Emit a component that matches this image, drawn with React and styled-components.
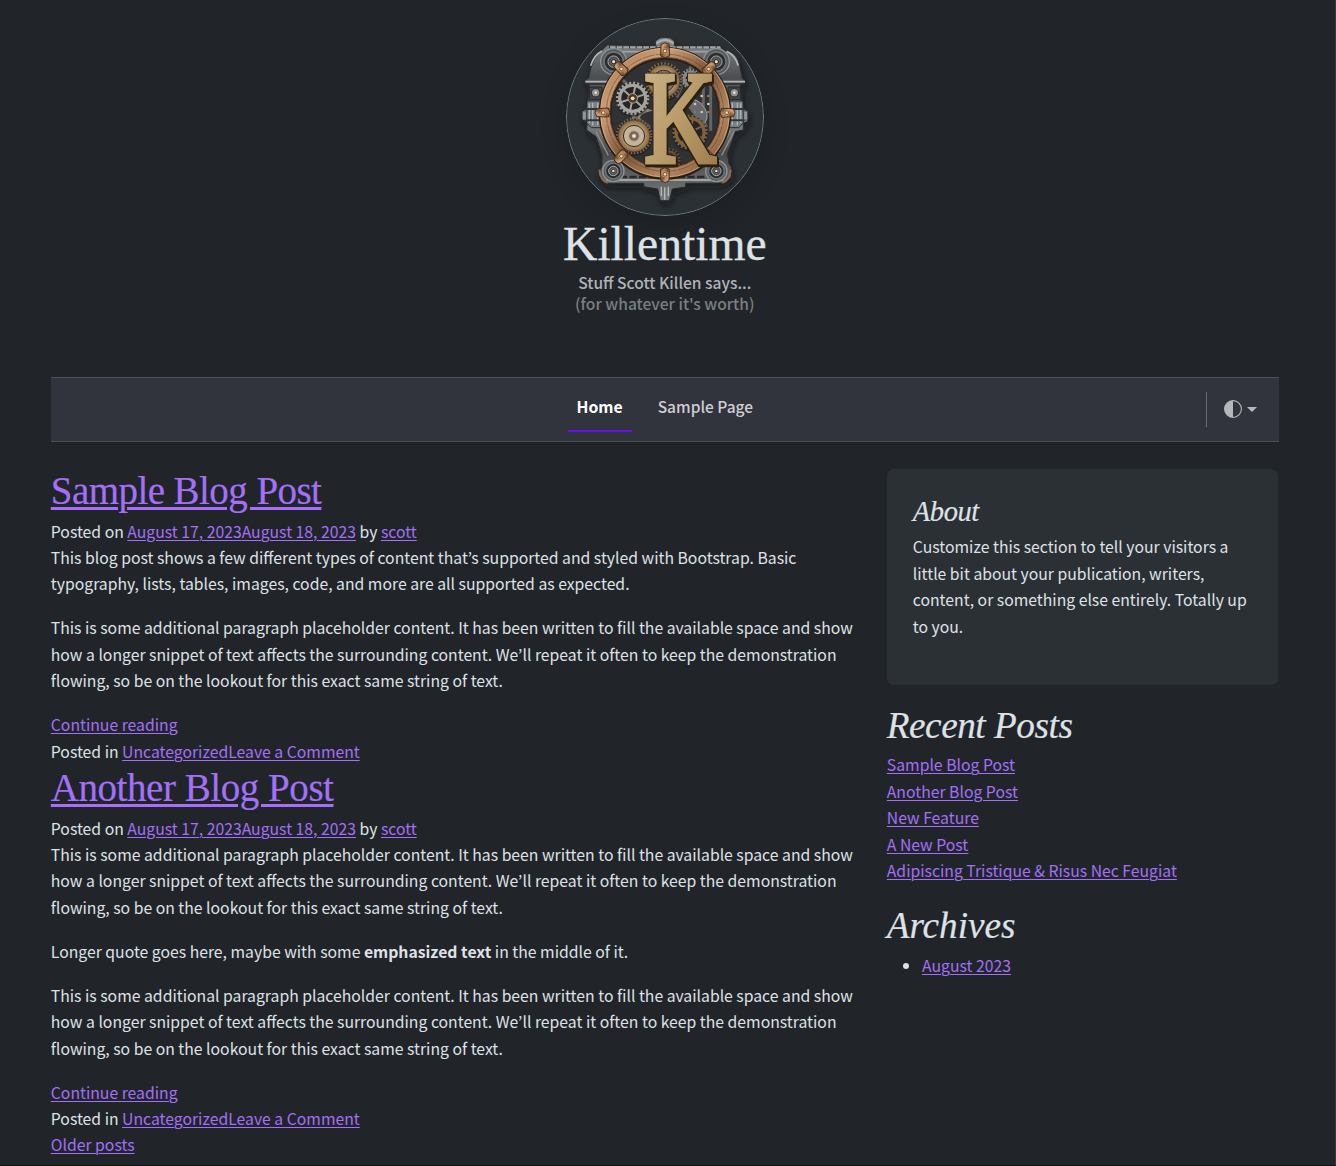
import React from "react";
import styled, { createGlobalStyle, css } from "styled-components";

const Global = createGlobalStyle`
  *, *::before, *::after { box-sizing: border-box; }
  html, body { margin: 0; padding: 0; background: #212529; }
  body {
    height: 1166px;
    overflow: hidden;
    color: #dee2e6;
    font-family: "Noto Sans CJK KR", "Open Sans", sans-serif;
    font-size: 15.76px;
    line-height: 26.4px;
  }
`;

const Page = styled.div`
  height: 1166px;
  padding: 18px 56px 0 50.8px;
  border-right: 1px solid #34383a;
  border-bottom: 1px solid #0d1013;
  overflow: hidden;
`;

const Header = styled.header`
  width: 1228px;
  height: 359px;
  display: flex;
  flex-direction: column;
  align-items: center;
`;

const Emblem = styled.svg`
  display: block;
  width: 198px;
  height: 198px;
  border-radius: 50%;
  box-shadow: 0 9px 26px rgba(0, 0, 0, 0.17);
`;

const SiteTitle = styled.h1`
  margin: 2px 0 1px;
  font: 400 47.6px/53px "Liberation Serif", serif;
  -webkit-text-stroke: 0.3px currentColor;
`;

const Tagline = styled.p`
  margin: 0;
  text-align: center;
  font-weight: 500;
  font-size: 15.58px;
  line-height: 21px;
  color: #afb3b7;
  small { display: block; font-size: inherit; color: #7a7f83; }
`;

const Nav = styled.nav`
  display: grid;
  grid-template-columns: 1fr auto 1fr;
  align-items: center;
  width: 1228px;
  height: 65px;
  background: #31343c;
  border-top: 1px solid #4d5154;
  border-bottom: 1px solid #4d5154;
`;

const NavLinks = styled.div`
  grid-column: 2;
  display: flex;
  gap: 17px;
  padding-bottom: 1px;
`;

const NavLink = styled.a`
  height: 46px;
  padding: ${(p) => (p.$active ? "8px" : "7px")} 9px 0;
  border-bottom: 2px solid ${(p) => (p.$active ? "#6610f2" : "transparent")};
  color: ${(p) => (p.$active ? "#fff" : "#ced0d3")};
  font-size: ${(p) => (p.$active ? "15.76px" : "15.5px")};
  font-weight: ${(p) => (p.$active ? 700 : 500)};
`;

const ThemeToggle = styled.button`
  justify-self: end;
  display: flex;
  align-items: center;
  gap: 5px;
  height: 35px;
  padding: 0 22px 1px 17px;
  border: 0;
  border-left: 1px solid #686b71;
  background: none;
  color: #b5b7ba;
`;

const Caret = styled.span`
  border: 5px solid transparent;
  border-top-color: currentColor;
  border-bottom: 0;
`;

const Columns = styled.div`
  display: grid;
  grid-template-columns: 809px 391px;
  gap: 27px;
  padding-top: 27px;
`;

const linkStyle = css`
  color: #a370f7;
  text-decoration: underline;
  text-decoration-thickness: 1px;
  text-underline-offset: 2px;
`;

const Link = styled.a`${linkStyle}`;

const Article = styled.article`
  & + & { padding-top: 0.9px; }
`;

const PostTitle = styled.h2`
  margin: 0;
  padding-top: 1px;
  height: 49.65px;
  font: 400 39px/42.24px "Liberation Serif", serif;
  letter-spacing: ${(p) => p.$tracking}px;
  -webkit-text-stroke: 0.2px currentColor;
  a { ${linkStyle} text-decoration-thickness: 3px; text-underline-offset: 3px; }
`;

const Line = styled.div`
  height: 26.4px;
  white-space: nowrap;
`;

const Paragraph = styled.p`
  margin: 0 0 17.6px;
`;

const Sidebar = styled.aside`
  display: flex;
  flex-direction: column;
  gap: 17.6px;
`;

const AboutCard = styled.section`
  height: 216px;
  padding: 26px;
  border-radius: 7px;
  background: #2b3035;
`;

const SideTitle = styled.h3`
  margin: 0;
  height: ${(p) => (p.$small ? "39.4px" : "49.9px")};
  padding-top: ${(p) => (p.$small ? "1px" : "2.4px")};
  font: italic 400 ${(p) => (p.$small ? "28.5px/31.7px" : "37.2px/42.24px")} "Liberation Serif", serif;
  letter-spacing: ${(p) => p.$tracking || 0}px;
  -webkit-text-stroke: 0.2px currentColor;
`;

const PlainList = styled.ol`
  margin: 0;
  padding: 0 0 0.9px;
  list-style: none;
`;

const BulletList = styled.ul`
  margin: 0;
  padding: 0 0 0 35.2px;
`;

const range = (n) => Array.from({ length: n }, (_, i) => i);

function Gear({ x, y, r, teeth = 20, fill, inner, hub = "#4b3828", spokes }) {
  return (
    <g transform={`translate(${x} ${y})`}>
      <circle r={r + 3} fill="#17181a" opacity="0.55" cy="4" />
      <circle r={r - 2} fill="none" stroke={fill} strokeWidth="8" strokeDasharray={`${(Math.PI * (r - 2)) / teeth} ${(Math.PI * (r - 2)) / teeth}`} />
      {spokes ? (
        <>
          <circle r={r - 9} fill="#242526" stroke={fill} strokeWidth="10" />
          {range(spokes).map((i) => (
            <line key={i} y2={-(r - 10)} stroke={fill} strokeWidth="6" transform={`rotate(${(360 / spokes) * i + 12})`} />
          ))}
        </>
      ) : (
        <>
          <circle r={r - 5} fill={fill} stroke="#3b2d20" strokeWidth="1.5" />
          <circle r={r * 0.6} fill={inner} stroke="#352c25" strokeWidth="3" />
        </>
      )}
      <circle r={r * 0.3} fill={hub} stroke="#b8a58d" strokeWidth="3" />
      <circle r={r * 0.12} fill="#efd9b8" />
    </g>
  );
}

function CornerWheel({ x, y, r = 32 }) {
  return (
    <g transform={`translate(${x} ${y})`}>
      <circle r={r} fill="#55585b" stroke="#8f9496" strokeWidth="4" />
      <circle r={r * 0.75} fill="#2a2c2e" stroke="#6d7275" strokeWidth="5" />
      <circle r={r * 0.44} fill="#4c4e50" stroke="#a8aaaa" strokeWidth="3" />
      <circle r={r * 0.23} fill="#222" stroke="#85888a" strokeWidth="2" />
      <circle r={r * 0.12} fill="#f1dfc4" />
    </g>
  );
}

function Logo() {
  return (
    <Emblem viewBox="18 22 594 594" aria-label="Killentime">
      <defs>
        <linearGradient id="iron" x1="0" y1="0" x2="0" y2="1">
          <stop offset="0" stopColor="#85888a" />
          <stop offset="0.25" stopColor="#4b4e51" />
          <stop offset="0.5" stopColor="#8a8e91" />
          <stop offset="0.7" stopColor="#454749" />
          <stop offset="1" stopColor="#77797b" />
        </linearGradient>
        <linearGradient id="bronze" x1="0" y1="0" x2="1" y2="1">
          <stop offset="0" stopColor="#a87850" />
          <stop offset="0.25" stopColor="#cda078" />
          <stop offset="0.5" stopColor="#7b5335" />
          <stop offset="0.75" stopColor="#b58a60" />
          <stop offset="1" stopColor="#74492c" />
        </linearGradient>
        <linearGradient id="gold" x1="0" y1="0" x2="1" y2="1">
          <stop offset="0" stopColor="#cdb78b" />
          <stop offset="0.5" stopColor="#b99c69" />
          <stop offset="1" stopColor="#997748" />
        </linearGradient>
        <radialGradient id="brass">
          <stop offset="0" stopColor="#8f6b45" />
          <stop offset="0.65" stopColor="#b8966d" />
          <stop offset="1" stopColor="#816444" />
        </radialGradient>
        <filter id="drop" x="-20%" y="-20%" width="140%" height="150%">
          <feDropShadow dx="4" dy="12" stdDeviation="9" floodColor="#08090a" floodOpacity="0.65" />
        </filter>
        <filter id="bevel" x="-20%" y="-20%" width="140%" height="140%">
          <feMorphology in="SourceAlpha" operator="dilate" radius="3" result="edge" />
          <feFlood floodColor="#2c2118" />
          <feComposite in2="edge" operator="in" result="rim" />
          <feOffset in="rim" dx="4" dy="6" result="side" />
          <feMerge>
            <feMergeNode in="side" />
            <feMergeNode in="rim" />
            <feMergeNode in="SourceGraphic" />
          </feMerge>
        </filter>
        <clipPath id="well"><circle cx="315" cy="308" r="163" /></clipPath>
      </defs>
      <circle cx="315" cy="319" r="295.5" fill="#2b3035" stroke="#6d7b82" strokeWidth="3" />
      <g filter="url(#drop)">
        <path d="M286 105V91Q298 79 315 80Q332 79 343 91V105H481L490 120Q526 122 536 151L547 203L555 210V219L541 224L547 292L563 302V332L550 338V358L526 363L502 430L507 460L514 469V500L492 517L377 518V529L337 535L328 570H301L293 535L251 528V518H137L116 493L126 464V433L108 378L80 358L82 335L67 326V302L82 292L88 223L75 218V208L86 202Q95 143 122 122L142 103Z" fill="url(#iron)" stroke="#292b2d" strokeWidth="3" />
        <path d="M150 110H480M135 123H491" fill="none" stroke="#a1a2a1" strokeWidth="5" />
        <path d="M147 109H482" stroke="#303335" strokeWidth="9" strokeDasharray="3 17" />
        <path d="M76 213H144M486 213H555" stroke="#b2b3b2" strokeWidth="5" />
        <path d="M76 220H144M486 220H555" stroke="#292c2f" strokeWidth="5" />
        <path d="M92 165Q102 133 126 121M535 165Q525 133 500 122" fill="none" stroke="#b5b5b2" strokeWidth="5" />
        <path d="M139 508H490" stroke="#aaa39a" strokeWidth="6" />
        <path d="M150 499H480" stroke="#2a2c2e" strokeWidth="7" strokeDasharray="22 7" />
      </g>
      {[0, 1].map((side) => (
        <g key={side} transform={side ? "translate(630 0) scale(-1 1)" : undefined}>
          <path d="M88 229H126V267H88Z" fill="#404448" stroke="#222426" strokeWidth="3" />
          <circle cx="107" cy="246" r="13" fill="#8d9091" stroke="#303234" strokeWidth="4" />
          <circle cx="107" cy="246" r="4" fill="#f2ddc6" />
          <path d="M81 271H122V351H94L80 337Z" fill="#777e84" stroke="#292b2d" strokeWidth="3" />
          <path d="M88 278V337M98 276V344M113 276V344" stroke="#afb4b8" strokeWidth="4" />
          <path d="M76 295H118M76 329H118" stroke="#303439" strokeWidth="6" />
          <path d="M67 301H79V328H67Z" fill="#92979a" stroke="#2f3235" strokeWidth="2" />
          <path d="M108 363L145 434M119 359L152 423" stroke="#8b8d8e" strokeWidth="4" />
          <path d="M118 477Q121 511 143 516" fill="none" stroke="#93694a" strokeWidth="6" />
        </g>
      ))}
      <CornerWheel x={161} y={153} r={39} />
      <CornerWheel x={469} y={153} r={39} />
      <CornerWheel x={160} y={481} />
      <CornerWheel x={469} y={481} />
      <path d="M289 99Q315 77 341 99" fill="none" stroke="#aeb0b0" strokeWidth="6" />
      <path d="M304 528V556M314 530V567M325 528V556" stroke="#b9b9b6" strokeWidth="4" />
      <circle cx="315" cy="308" r="174" fill="#191b1c" />
      <g clipPath="url(#well)">
        <rect x="150" y="140" width="330" height="340" fill="#303133" />
        <path d="M180 200L265 280M170 280L270 350M394 166L350 260M370 210L440 350M430 220V350M452 225V360" stroke="#626467" strokeWidth="9" />
        <path d="M370 269Q413 255 435 294Q452 325 425 346" fill="#66696d" stroke="#a1a3a5" strokeWidth="3" />
        <path d="M218 327Q226 287 267 299Q229 309 238 329" fill="none" stroke="#8c8175" strokeWidth="7" />
        <Gear x={390} y={365} r={51} teeth={25} fill="#81613f" inner="#4d3927" spokes={7} />
        <Gear x={392} y={204} r={29} teeth={18} fill="#878888" inner="#555" spokes={6} />
        <Gear x={218} y={263} r={48} teeth={24} fill="#a5a39d" inner="#555" spokes={6} />
        <Gear x={311} y={211} r={54} teeth={32} fill="url(#brass)" inner="#87745e" />
        <Gear x={222} y={376} r={53} teeth={34} fill="url(#brass)" inner="#c5b49c" hub="#77685b" />
        <Gear x={325} y={448} r={35} teeth={20} fill="#675038" inner="#47382d" />
        {range(9).map((i) => <circle key={i} cx={405 + (i % 3) * 20} cy={256 + Math.floor(i / 3) * 24} r="4" fill={i % 2 ? "#c8c9c8" : "#a47047"} />)}
      </g>
      <circle cx="315" cy="308" r="180" fill="none" stroke="#281e18" strokeWidth="38" />
      <circle cx="315" cy="306" r="180" fill="none" stroke="url(#bronze)" strokeWidth="29" />
      <circle cx="315" cy="306" r="193" fill="none" stroke="#dcb288" strokeWidth="3" opacity="0.7" />
      <circle cx="315" cy="306" r="176" fill="none" stroke="#5c3b22" strokeWidth="1.5" strokeDasharray="37 3" />
      <circle cx="315" cy="306" r="166" fill="none" stroke="#6a4a2d" strokeWidth="3" />
      {range(8).map((i) => (
        <g key={i} transform={`rotate(${i * 45} 315 306) translate(315 121)`}>
          <path d="M-12-20Q0-29 12-20L14 15Q0 24-13 15Z" fill="url(#bronze)" stroke="#493020" strokeWidth="3" />
          <circle r="8" fill="#76502f" stroke="#dcab77" strokeWidth="2" />
          <circle r="4" fill="#f4d8b3" />
        </g>
      ))}
      <g filter="url(#bevel)">
        <text
          transform="translate(252 455) scale(.88 1.16)"
          fontFamily="Liberation Serif"
          fontSize="342"
          fill="url(#gold)"
          stroke="url(#gold)"
          strokeWidth="11"
        >
          K
        </text>
      </g>
    </Emblem>
  );
}

const Filler = () => (
  <Paragraph>
    This is some additional paragraph placeholder content. It has been written to fill the available space and show<br />
    how a longer snippet of text affects the surrounding content. We’ll repeat it often to keep the demonstration<br />
    flowing, so be on the lookout for this exact same string of text.
  </Paragraph>
);

const Post = ({ title, tracking, children }) => (
  <Article>
    <PostTitle $tracking={tracking}><a>{title}</a></PostTitle>
    <Line>Posted on <Link>August 17, 2023</Link><Link>August 18, 2023</Link> by <Link>scott</Link></Line>
    {children}
    <Line><Link>Continue reading</Link></Line>
    <Line>Posted in <Link>Uncategorized</Link><Link>Leave a Comment</Link></Line>
  </Article>
);

const recent = ["Sample Blog Post", "Another Blog Post", "New Feature", "A New Post", "Adipiscing Tristique & Risus Nec Feugiat"];

export default function App() {
  return (
    <Page>
      <Global />
      <Header>
        <Logo />
        <SiteTitle>Killentime</SiteTitle>
        <Tagline>Stuff Scott Killen says...<small>(for whatever it's worth)</small></Tagline>
      </Header>
      <Nav>
        <NavLinks>
          <NavLink $active>Home</NavLink>
          <NavLink>Sample Page</NavLink>
        </NavLinks>
        <ThemeToggle aria-label="Toggle theme">
          <svg width="18" height="18" viewBox="0 0 16 16" fill="currentColor">
            <path d="M8 15A7 7 0 1 0 8 1v14zm0 1A8 8 0 1 1 8 0a8 8 0 0 1 0 16z" />
          </svg>
          <Caret />
        </ThemeToggle>
      </Nav>
      <Columns>
        <main>
          <Post title="Sample Blog Post" tracking={-0.56}>
            <Paragraph>
              This blog post shows a few different types of content that’s supported and styled with Bootstrap. Basic<br />
              typography, lists, tables, images, code, and more are all supported as expected.
            </Paragraph>
            <Filler />
          </Post>
          <Post title="Another Blog Post" tracking={-0.45}>
            <Filler />
            <Paragraph>Longer quote goes here, maybe with some <strong>emphasized text</strong> in the middle of it.</Paragraph>
            <Filler />
          </Post>
          <Line><Link>Older posts</Link></Line>
        </main>
        <Sidebar>
          <AboutCard>
            <SideTitle $small $tracking={-0.4}>About</SideTitle>
            <Paragraph>
              Customize this section to tell your visitors a little bit about your publication, writers, content, or something else entirely. Totally up to you.
            </Paragraph>
          </AboutCard>
          <section>
            <SideTitle $tracking={-0.45}>Recent Posts</SideTitle>
            <PlainList>{recent.map((t) => <li key={t}><Link>{t}</Link></li>)}</PlainList>
          </section>
          <section>
            <SideTitle>Archives</SideTitle>
            <BulletList><li><Link>August 2023</Link></li></BulletList>
          </section>
        </Sidebar>
      </Columns>
    </Page>
  );
}
